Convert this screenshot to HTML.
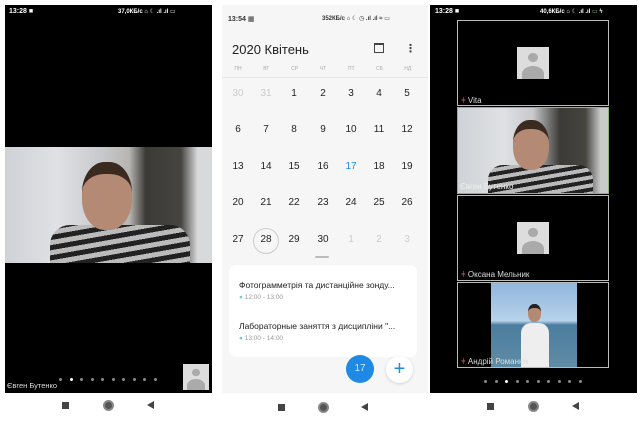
<!DOCTYPE html><html><head><meta charset="utf-8"><style>
*{margin:0;padding:0;box-sizing:border-box}
body{width:640px;height:425px;background:#fff;position:relative;overflow:hidden;font-family:"Liberation Sans","DejaVu Sans",sans-serif}
.a{position:absolute}
.blk{background:#000}
.sb{color:#fff;font-size:7px;font-weight:bold}
.nav-sq{width:7px;height:7px;background:#444}
.nav-c{width:11px;height:11px;border-radius:50%;border:2px solid #888;background:#555}
.nav-t{width:0;height:0;border-top:4px solid transparent;border-bottom:4px solid transparent;border-right:7px solid #444}
.cal{font-size:10px;color:#222;width:20px;text-align:center}
.wd{font-size:5px;color:#aaa;width:20px;text-align:center}
.tile{background:#000;border:1px solid #bbb}
.av{background:#ddd;overflow:hidden}
.av .h{position:absolute;left:35%;top:18%;width:30%;height:30%;border-radius:50%;background:#aaa}
.av .b{position:absolute;left:15%;top:58%;width:70%;height:50%;border-radius:50% 50% 0 0;background:#aaa}
.nm{color:#ddd;font-size:8px}
.dot{width:3px;height:3px;border-radius:50%;background:#888}
</style></head><body>
<!-- LEFT -->
<div class="a blk" style="left:5px;top:5px;width:207px;height:388px"></div>
<div class="a sb" style="left:9px;top:8px">13:28 ■</div>
<div class="a sb" style="left:118px;top:8px;font-size:6px">37,0КБ/с ⌂ ☾ .ıl .ıl ▭</div>
<div class="a" style="left:5px;top:147px;width:207px;height:116px;background:linear-gradient(90deg,#cfd2d6 0,#dfe1e4 25%,#c9cbcf 45%,#b8b6b2 60%,#3b3a36 68%,#46443f 85%,#d8d9db 93%)"></div>
<div class="a" style="left:50px;top:225px;width:140px;height:38px;background:repeating-linear-gradient(170deg,#222 0 5px,#bbb 5px 10px);border-radius:20px 20px 0 0"></div>
<div class="a" style="left:82px;top:162px;width:50px;height:68px;background:#b58a74;border-radius:45%;border-top:12px solid #3a2a20"></div>
<div class="a nm" style="left:7px;top:381px;font-size:7.5px">Євген Бутенко</div>
<div class="a av" style="left:183px;top:364px;width:26px;height:26px"><div class="h"></div><div class="b"></div></div>
<div class="a" style="left:59px;top:378px;display:flex;gap:7.5px"><div class="dot"></div><div class="dot" style="background:#fff"></div><div class="dot"></div><div class="dot"></div><div class="dot"></div><div class="dot"></div><div class="dot"></div><div class="dot"></div><div class="dot"></div><div class="dot"></div></div>
<div class="a nav-sq" style="left:62px;top:402px"></div>
<div class="a nav-c" style="left:103px;top:400px"></div>
<div class="a nav-t" style="left:147px;top:401px"></div>
<!-- MIDDLE -->
<div class="a" style="left:222px;top:5px;width:206px;height:388px;background:#f6f6f6"></div>
<div class="a" style="left:228px;top:15px;font-size:7px;font-weight:bold;color:#333">13:54 ▦</div>
<div class="a" style="left:322px;top:15px;font-size:6px;font-weight:bold;color:#333">352КБ/с ⌂ ☾ ◷ .ıl .ıl ≈ ▭</div>
<div class="a" style="left:232px;top:42px;font-size:13px;color:#222">2020 Квітень</div>
<div class="a" style="left:374px;top:43px;width:10px;height:10px;border:1px solid #444;border-top-width:2px"></div>
<div class="a" style="left:405px;top:42px;font-size:11px;color:#444;font-weight:bold">⋮</div>
<div class="a" style="left:228px;top:66px;display:flex;gap:8.3px">
<div class="wd">ПН</div><div class="wd">ВТ</div><div class="wd">СР</div><div class="wd">ЧТ</div><div class="wd">ПТ</div><div class="wd">СБ</div><div class="wd">НД</div></div>
<div class="a" style="left:222px;top:77px;width:206px;height:1px;background:#e6e6e6"></div>
<div id="cal"></div>
<div class="a" style="left:315px;top:256px;width:14px;height:2px;background:#bbb;border-radius:1px"></div>
<div class="a" style="left:253px;top:228px;width:26px;height:26px;border-radius:50%;border:1px solid #ccc"></div>
<div class="a" style="left:229px;top:265px;width:188px;height:92px;background:#fff;border-radius:7px"></div>
<div class="a" style="left:239px;top:280px;font-size:8.5px;color:#222">Фотограмметрія та дистанційне зонду...</div>
<div class="a" style="left:239px;top:294px;font-size:6.5px;color:#999"><span style="color:#7cc">●</span> 12:00 - 13:00</div>
<div class="a" style="left:239px;top:321px;font-size:8.5px;color:#222">Лабораторные заняття з дисципліни "...</div>
<div class="a" style="left:239px;top:335px;font-size:6.5px;color:#999"><span style="color:#7cc">●</span> 13:00 - 14:00</div>
<div class="a" style="left:346px;top:355px;width:28px;height:28px;border-radius:50%;background:#1e8ae6;color:#cfe6fb;font-size:10px;text-align:center;line-height:28px">17</div>
<div class="a" style="left:386px;top:356px;width:27px;height:27px;border-radius:50%;background:#fff;color:#1e8ae6;font-size:20px;text-align:center;line-height:26px;box-shadow:0 1px 3px rgba(0,0,0,.15)">+</div>
<div class="a nav-sq" style="left:278px;top:404px"></div>
<div class="a nav-c" style="left:318px;top:402px"></div>
<div class="a nav-t" style="left:361px;top:403px"></div>
<!-- RIGHT -->
<div class="a blk" style="left:430px;top:5px;width:207px;height:388px"></div>
<div class="a sb" style="left:435px;top:8px">13:28 ■</div>
<div class="a sb" style="left:540px;top:8px;font-size:6px">40,6КБ/с ⌂ ☾ .ıl .ıl <span style="color:#8c8">▭</span> ϟ</div>
<div class="a tile" style="left:457px;top:20px;width:152px;height:86px"><div class="a av" style="left:59px;top:26px;width:32px;height:32px"><div class="h"></div><div class="b"></div></div><div class="a nm" style="left:3px;top:75px"><span style="color:#c44">ǂ</span> Vita</div></div>
<div class="a" style="left:457px;top:107px;width:152px;height:87px;border:1px solid #8fb86a;background:linear-gradient(90deg,#cfd2d6 0,#dfe1e4 30%,#c7c9cc 50%,#3b3a36 68%,#46443f 85%,#c8c9cb 95%)"><div class="a" style="left:30px;top:57px;width:105px;height:28px;background:repeating-linear-gradient(170deg,#222 0 4px,#bbb 4px 8px);border-radius:15px 15px 0 0"></div><div class="a" style="left:55px;top:12px;width:36px;height:50px;background:#b58a74;border-radius:45%;border-top:9px solid #3a2a20"></div><div class="a nm" style="left:2px;top:74px;color:#eee">Євген Бутенко</div></div>
<div class="a tile" style="left:457px;top:195px;width:152px;height:86px"><div class="a av" style="left:59px;top:26px;width:32px;height:32px"><div class="h"></div><div class="b"></div></div><div class="a nm" style="left:3px;top:74px"><span style="color:#c44">ǂ</span> Оксана Мельник</div></div>
<div class="a tile" style="left:457px;top:282px;width:152px;height:86px"><div class="a" style="left:33px;top:0;width:86px;height:84px;background:linear-gradient(180deg,#8fb6dc 0,#b8d2ea 45%,#4b7d9e 50%,#5f8ca6 100%)"><div class="a" style="left:30px;top:40px;width:28px;height:44px;background:#eee;border-radius:10px 10px 0 0"></div><div class="a" style="left:37px;top:21px;width:13px;height:18px;background:#b58a74;border-radius:45%;border-top:4px solid #222"></div></div><div class="a nm" style="left:3px;top:74px"><span style="color:#c44">ǂ</span> Андрій Романюк</div></div>
<div class="a" style="left:484px;top:380px;display:flex;gap:7.5px"><div class="dot"></div><div class="dot"></div><div class="dot" style="background:#fff"></div><div class="dot"></div><div class="dot"></div><div class="dot"></div><div class="dot"></div><div class="dot"></div><div class="dot"></div><div class="dot"></div></div>
<div class="a nav-sq" style="left:487px;top:403px"></div>
<div class="a nav-c" style="left:528px;top:401px"></div>
<div class="a nav-t" style="left:572px;top:402px"></div>
<script>
var rows=[[30,31,1,2,3,4,5],[6,7,8,9,10,11,12],[13,14,15,16,17,18,19],[20,21,22,23,24,25,26],[27,28,29,30,1,2,3]];
var ys=[88,124,161,197,234],xs=[228,256,284,313,341,369,397],h='';
rows.forEach(function(r,i){r.forEach(function(d,j){var c='#222';if((i==0&&j<2)||(i==4&&j>3))c='#ccc';if(i==2&&j==4)c='#1e8ae6';
h+='<div class="a cal" style="left:'+xs[j]+'px;top:'+ys[i]+'px;color:'+c+'">'+d+'</div>';});});
document.getElementById('cal').innerHTML=h;
</script>
</body></html>
